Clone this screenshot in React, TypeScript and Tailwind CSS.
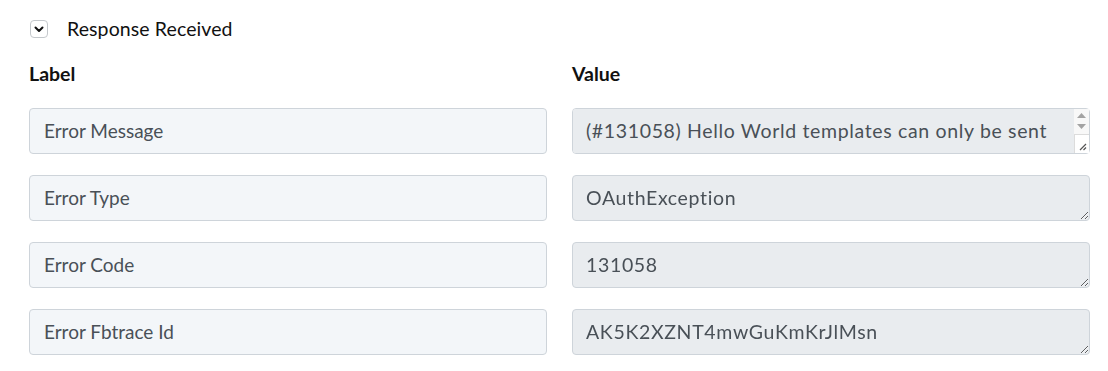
import { useState } from "react";

const ROWS = [
  {
    label: "Error Message",
    value: "(#131058) Hello World templates can only be sent from the Public Test Numbers",
  },
  { label: "Error Type", value: "OAuthException" },
  { label: "Error Code", value: "131058" },
  { label: "Error Fbtrace Id", value: "AK5K2XZNT4mwGuKmKrJlMsn" },
];

function FakeScrollbar() {
  // the headless browser hides native scrollbars, so the first box gets a drawn one
  return (
    <div className="pointer-events-none absolute right-[1px] top-[1px] bottom-[1px] flex w-[15px] flex-col bg-[#f8f8f8]">
      <div className="flex flex-1 flex-col items-center justify-center gap-[6px] pb-[2px]">
        <svg width="9" height="5" viewBox="0 0 9 5">
          <path d="M0 5 4.5 0 9 5z" fill="#a3a3a3" />
        </svg>
        <svg width="9" height="5" viewBox="0 0 9 5">
          <path d="M0 0h9L4.5 5z" fill="#a3a3a3" />
        </svg>
      </div>
      <div className="relative h-[19px] border-l border-t border-[#dcdcdc] bg-white">
        <svg className="absolute bottom-[2px] right-[2px]" width="8" height="8" viewBox="0 0 8 8">
          <path d="M1 7 7 1M4.5 7 7 4.5" stroke="#555" strokeWidth="1.2" />
        </svg>
      </div>
    </div>
  );
}

export default function App() {
  const [open, setOpen] = useState(true);

  return (
    <div className="min-h-screen bg-white pl-[29px] pr-[18px] pt-[19px] font-[family-name:Lato,'Liberation_Sans',sans-serif] text-[#212529]">
      <div className="flex items-center gap-[19px]">
        <button
          type="button"
          onClick={() => setOpen(!open)}
          className="ml-[1px] flex h-[18px] w-[18px] items-center justify-center rounded-[4px] border border-[#c4c8cc] bg-white"
        >
          <svg width="10" height="7" viewBox="0 0 10 7" fill="none">
            <path d="M1.5 1.5 5 5l3.5-3.5" stroke="#111" strokeWidth="2" strokeLinecap="round" strokeLinejoin="round" />
          </svg>
        </button>
        <span className="text-[19.5px] leading-[20px] tracking-[0.1px] text-[#111]">Response Received</span>
      </div>

      {open && (
        <div className="mt-[23px] grid grid-cols-[518px_1fr] gap-x-[25px]">
          <div className="text-[19.5px] font-bold leading-[24px] text-[#111]">Label</div>
          <div className="text-[19.5px] font-bold leading-[24px] text-[#111]">Value</div>

          {ROWS.map((row, i) => (
            <div key={row.label} className="contents">
              <div
                className={`${i === 0 ? "mt-[22px]" : "mt-[21px]"} flex h-[46px] items-center rounded-[4px] border border-[#ced4da] bg-[#f3f6f9] px-[14px] text-[19px] text-[#495057]`}
              >
                {row.label}
              </div>
              <div className={`${i === 0 ? "mt-[22px]" : "mt-[21px]"} relative`}>
                <textarea
                  readOnly
                  rows={1}
                  value={row.value}
                  className={`block h-[46px] w-full rounded-[4px] border border-[#ced4da] bg-[#e9ecef] pl-[13px] ${i === 0 ? "pr-[20px]" : "pr-[16px]"} pt-[7px] text-[19.5px] leading-[30px] tracking-[0.65px] text-[#495057] outline-none`}
                />
                {i === 0 && <FakeScrollbar />}
              </div>
            </div>
          ))}
        </div>
      )}
    </div>
  );
}
